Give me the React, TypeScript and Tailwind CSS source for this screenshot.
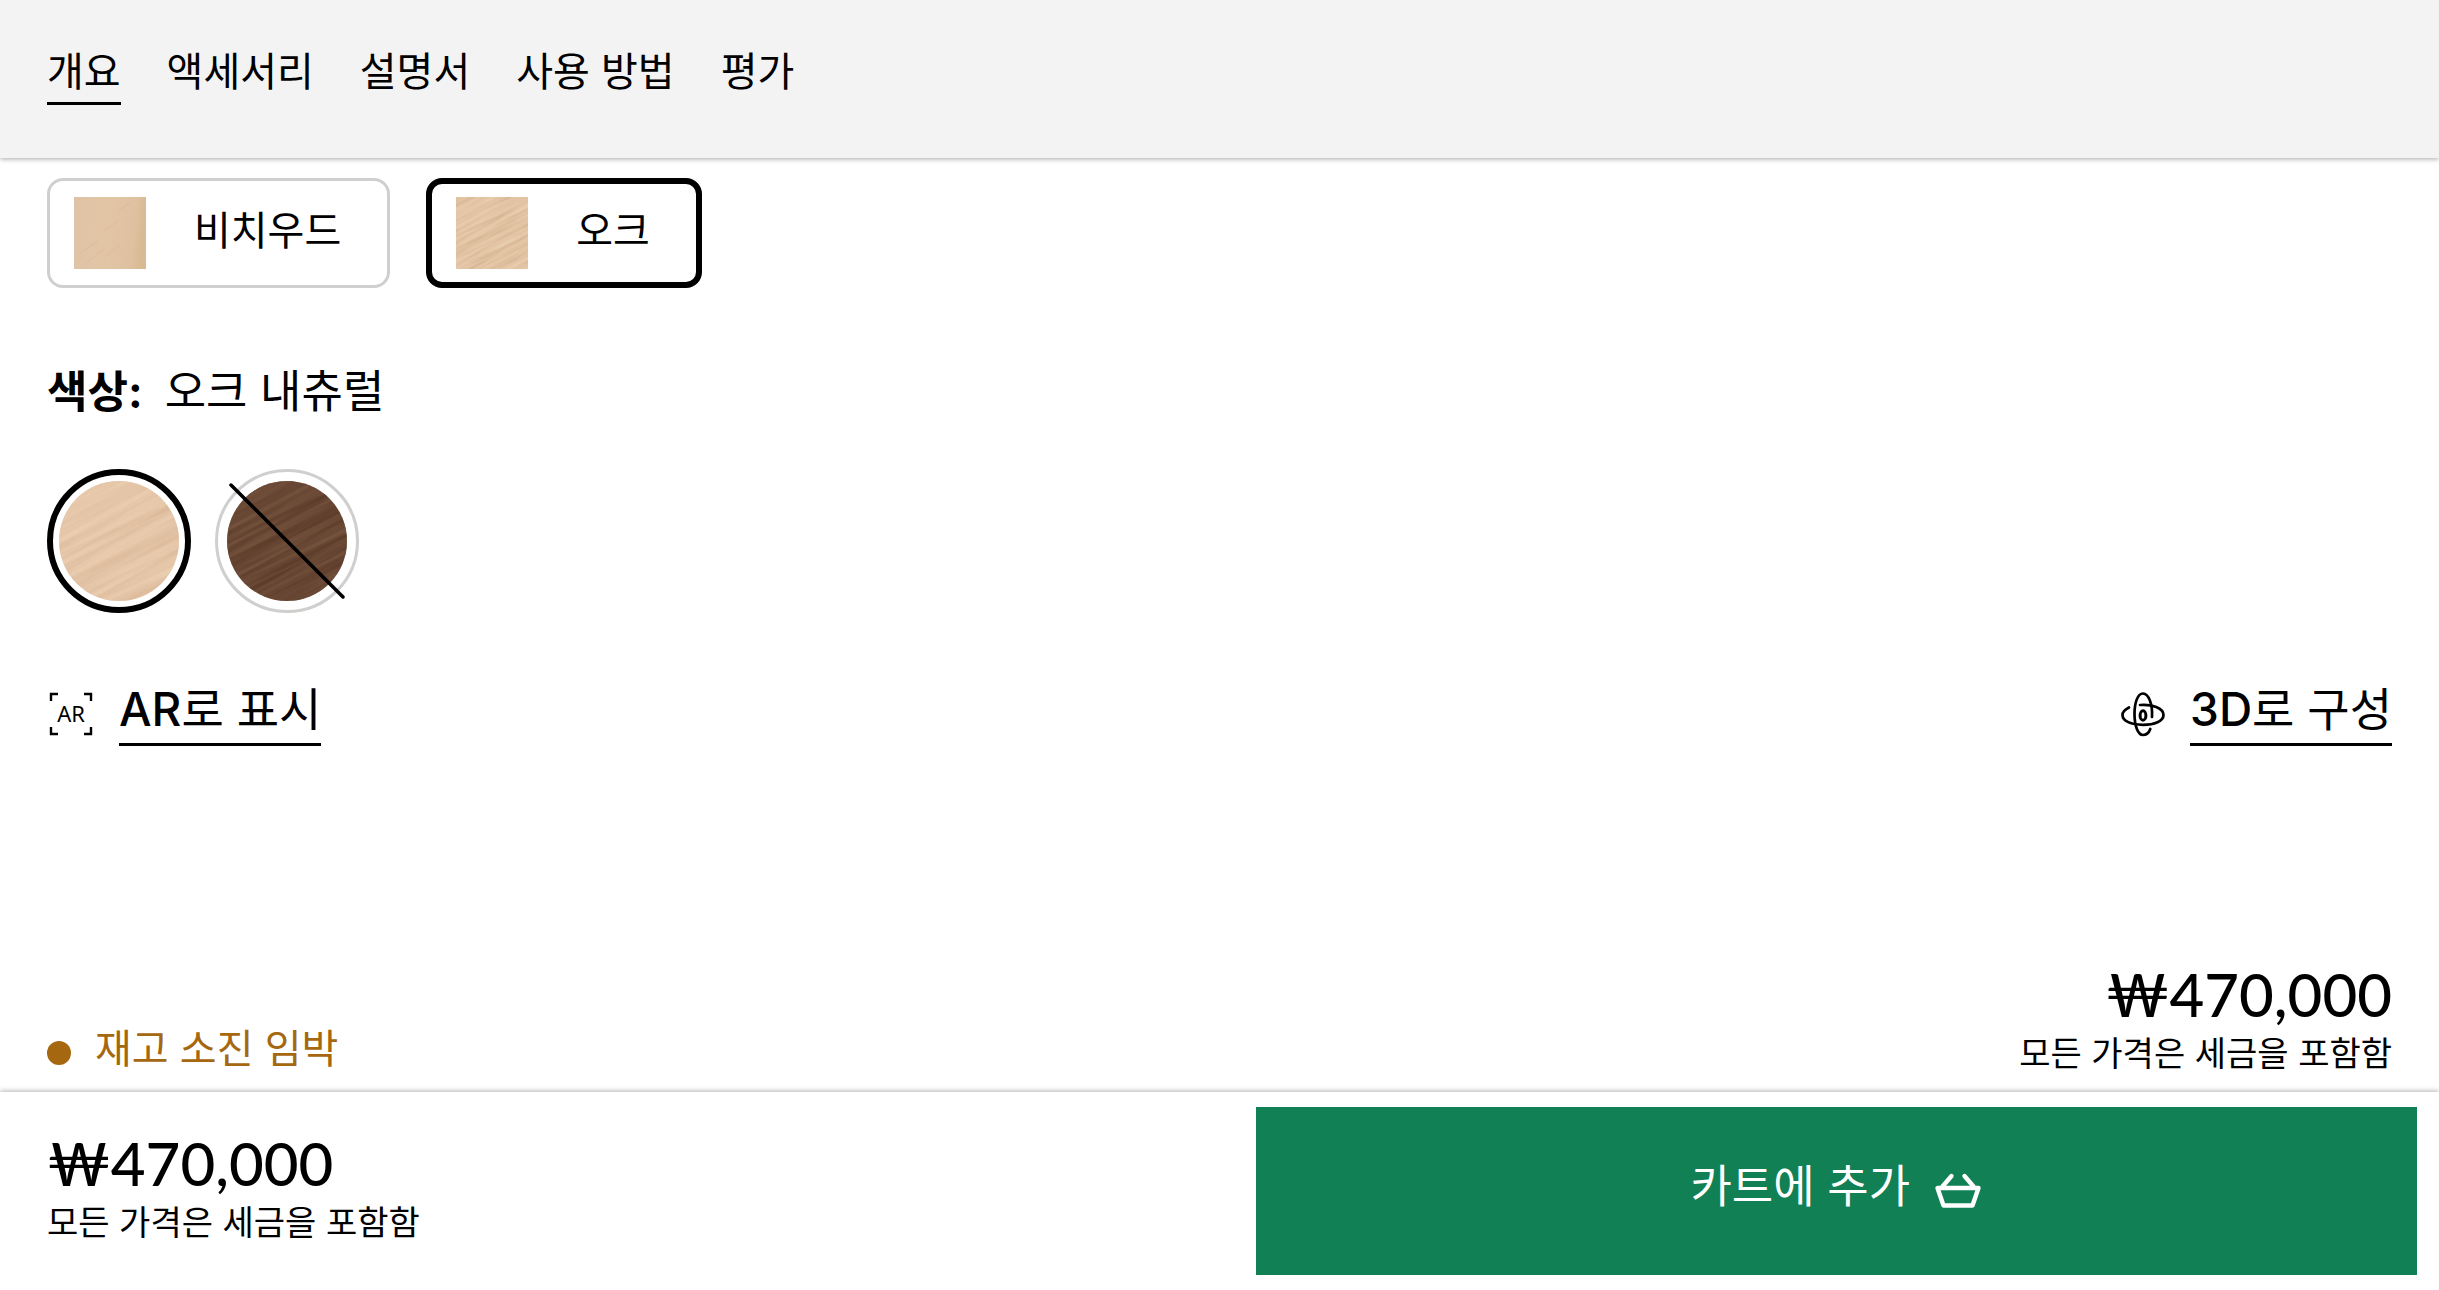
import type { ReactNode } from "react";

const navItems = ["개요", "액세서리", "설명서", "사용 방법", "평가"];

function BeechPattern() {
  return (
    <svg viewBox="0 0 72 72" className="size-[72px] shrink-0" aria-hidden="true">
      <defs>
        <linearGradient id="beech" x1="0" y1="0.2" x2="1" y2="0.3">
          <stop offset="0" stopColor="#dfc3a6" />
          <stop offset="0.5" stopColor="#e1c5a4" />
          <stop offset="0.85" stopColor="#dfc1a1" />
          <stop offset="1" stopColor="#d9b991" />
        </linearGradient>
      </defs>
      <rect width="72" height="72" fill="url(#beech)" />
      <path d="M6 56 24 44M12 66 30 52M30 34 44 24M44 14 56 6M30 60 46 48" stroke="#d3b18a" strokeWidth="1" opacity="0.4" />
    </svg>
  );
}

type Grain = { id: string; base: string; dark: string; light: string; frequency: string; className: string };

function WoodGrain({ id, base, dark, light, frequency, className }: Grain) {
  return (
    <svg viewBox="0 0 120 120" className={className} aria-hidden="true">
      <defs>
        <filter id={`${id}-dark`} x="0" y="0" width="1" height="1" colorInterpolationFilters="sRGB">
          <feTurbulence type="fractalNoise" baseFrequency={frequency} numOctaves="3" seed="4" />
          <feColorMatrix values="0 0 0 0 0  0 0 0 0 0  0 0 0 0 0  2.2 0 0 0 -0.9" result="n" />
          <feFlood floodColor={dark} />
          <feComposite in2="n" operator="in" />
        </filter>
        <filter id={`${id}-light`} x="0" y="0" width="1" height="1" colorInterpolationFilters="sRGB">
          <feTurbulence type="fractalNoise" baseFrequency={frequency} numOctaves="3" seed="11" />
          <feColorMatrix values="0 0 0 0 0  0 0 0 0 0  0 0 0 0 0  2.2 0 0 0 -0.9" result="n" />
          <feFlood floodColor={light} />
          <feComposite in2="n" operator="in" />
        </filter>
      </defs>
      <rect width="120" height="120" fill={base} />
      <g transform="rotate(-27 60 60)">
        <rect x="-40" y="-40" width="200" height="200" filter={`url(#${id}-dark)`} />
        <rect x="-40" y="-40" width="200" height="200" filter={`url(#${id}-light)`} />
      </g>
    </svg>
  );
}

function ArIcon() {
  return (
    <svg viewBox="0 0 48 48" className="mb-2 size-12" aria-hidden="true">
      <path d="M4 11V4h7M37 4h7v7M44 37v7h-7M11 44H4v-7" fill="none" stroke="#000" strokeWidth="2.4" />
      <text x="24" y="32" textAnchor="middle" fontSize="22" fontFamily="'Noto Sans', sans-serif">
        AR
      </text>
    </svg>
  );
}

function RotateIcon() {
  return (
    <svg viewBox="0 0 48 48" className="mb-2 size-12" fill="none" stroke="#000" strokeWidth="2.7" strokeLinecap="round" aria-hidden="true">
      <path d="M34 27C34.8 14 30.500 3.500 25 3.500C19.500 3.500 16.500 13 16.500 24C16.500 36 20 45 25 45C28.500 45 31 42.500 32.300 39" />
      <path d="M22 15C34 14 45.500 18 45.500 25C45.500 31 36.500 34.800 25 34.800C13 34.800 4.500 31 4.500 25C4.500 22 7 19.500 11 17.500" />
      <ellipse cx="25" cy="25.500" rx="2.900" ry="4.700" strokeWidth="3" />
    </svg>
  );
}

function BasketIcon() {
  return (
    <svg viewBox="0 0 48 48" className="size-12" fill="none" stroke="#fff" strokeWidth="4.4" strokeLinecap="round" strokeLinejoin="round" aria-hidden="true">
      <path d="M3.500 21h41L38.500 38.500h-29Z" />
      <path d="M8.500 19.500 17.500 9M39.500 19.500 30.500 9" />
    </svg>
  );
}

function ActionLink({ icon, latin, label }: { icon: ReactNode; latin: string; label: string }) {
  return (
    <a href="#view" className="flex items-end gap-6">
      {icon}
      <span className="border-b-[3px] border-black text-[46px] leading-[68px]">
        <span className="font-medium">{latin}</span>
        {label}
      </span>
    </a>
  );
}

function Price({ align }: { align: string }) {
  return (
    <div className={align}>
      <p className="pb-1 font-[Lato,'Noto_Sans_CJK_KR',sans-serif] text-[60px] font-medium leading-[60px]">₩470,000</p>
      <p className="text-[34px] leading-[52px]">모든 가격은 세금을 포함함</p>
    </div>
  );
}

export default function App() {
  return (
    <div className="flex min-h-screen flex-col bg-white font-[Inter,'Noto_Sans_CJK_KR',sans-serif] text-black">
      <header className="relative bg-[#f3f3f3] px-[47px] pt-11 pb-[53px] shadow-[0_1px_5px_rgba(0,0,0,0.35)]">
        <nav className="flex gap-[46px] text-[40px] leading-[56px]">
          {navItems.map((item, i) => (
            <a
              key={item}
              href="#section"
              aria-current={i === 0 ? "true" : undefined}
              className={i === 0 ? "border-b-[3px] border-black pb-[2px]" : "border-b-[3px] border-transparent pb-[2px]"}
            >
              {item}
            </a>
          ))}
        </nav>
      </header>

      <main className="flex flex-1 flex-col px-[47px] pt-5 pb-3">
        <div className="flex gap-9 text-[40px] leading-[56px]">
          <button className="flex items-center gap-12 rounded-2xl border-[3px] border-[#cfcfcd] py-4 pr-[46px] pl-6">
            <BeechPattern />
            <span className="pb-1">비치우드</span>
          </button>
          <button aria-pressed="true" className="flex items-center gap-12 rounded-2xl border-[6px] border-black py-[13px] pr-[46px] pl-6">
            <WoodGrain id="oak-card" base="#e2c4a4" dark="#d3ae8a" light="#ebd0b2" frequency="0.01 0.18" className="size-[72px] shrink-0" />
            <span className="pb-1">오크</span>
          </button>
        </div>

        <p className="mt-[74px] flex gap-[22px] text-[45px] leading-[60px]">
          <span className="text-[44px] font-bold">색상:</span>
          <span>오크 내츄럴</span>
        </p>

        <div className="mt-[47px] flex gap-6">
          <button aria-label="오크 내츄럴" aria-pressed="true" className="flex size-36 items-center justify-center rounded-full border-[6px] border-black">
            <WoodGrain id="oak" base="#e5c5a8" dark="#d9b695" light="#ebcfb1" frequency="0.007 0.14" className="size-[120px] shrink-0 rounded-full" />
          </button>
          <button aria-label="오크 다크" className="relative flex size-36 items-center justify-center rounded-full border-[3px] border-[#cfcfcd]">
            <WoodGrain id="walnut" base="#674633" dark="#543624" light="#775540" frequency="0.007 0.2" className="size-[120px] shrink-0 rounded-full" />
            <svg viewBox="0 0 138 138" className="absolute inset-0" aria-hidden="true">
              <path d="M13 13 125 125" stroke="#000" strokeWidth="3.500" strokeLinecap="round" />
            </svg>
          </button>
        </div>

        <div className="mt-[62px] flex justify-between">
          <ActionLink icon={<ArIcon />} latin="AR" label="로 표시" />
          <ActionLink icon={<RotateIcon />} latin="3D" label="로 구성" />
        </div>

        <div className="mt-auto flex items-end justify-between">
          <p className="mb-[3px] flex items-end gap-6 text-[40px] leading-[56px] text-[#a5670f]">
            <span className="mb-3 size-6 rounded-full bg-[#a5670f]" />
            재고 소진 임박
          </p>
          <Price align="text-right" />
        </div>
      </main>

      <footer className="relative grid grid-cols-2 items-center bg-white py-[15px] shadow-[0_-1px_5px_rgba(0,0,0,0.3)]">
        <div className="pl-[47px]">
          <Price align="text-left" />
        </div>
        <div className="pr-[22px] pl-9">
          <button className="flex h-[168px] w-full items-center justify-center gap-6 bg-[#128055] text-[45px] leading-[60px] text-white">
            <span className="pb-2">카트에 추가</span>
            <BasketIcon />
          </button>
        </div>
      </footer>
    </div>
  );
}
